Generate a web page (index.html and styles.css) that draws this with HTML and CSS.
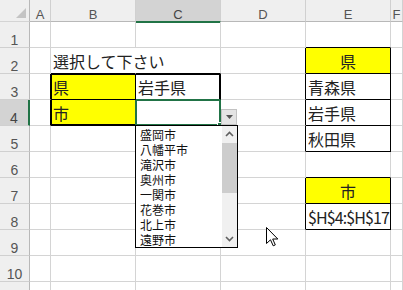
FILE: index.html
```html
<!DOCTYPE html>
<html lang="ja">
<head>
<meta charset="utf-8">
<title>Sheet</title>
<link rel="stylesheet" href="styles.css">
</head>
<body>
<div class="sheet">
  <div class="grid">
    <div class="hd corner"><svg class="tri" width="30" height="22" viewBox="0 0 30 22"><polygon points="16,18 26,18 26,8" fill="#c4c4c4"/></svg></div>
    <div class="hd col">A</div>
    <div class="hd col">B</div>
    <div class="hd col sel">C</div>
    <div class="hd col">D</div>
    <div class="hd col">E</div>
    <div class="hd col">F</div>

    <div class="hd rh">1</div>
    <div></div><div></div><div></div><div></div><div class="bb"></div><div></div>

    <div class="hd rh">2</div>
    <div></div>
    <div class="bb nbr">選択して下さい</div>
    <div class="bb"></div>
    <div class="br"></div>
    <div class="y br bb ctr">県</div>
    <div></div>

    <div class="hd rh">3</div>
    <div class="br"></div>
    <div class="y br bb b3">県</div>
    <div class="br gb c3">岩手県</div>
    <div class="br"></div>
    <div class="br bb">青森県</div>
    <div></div>

    <div class="hd rh sel">4</div>
    <div class="br"></div>
    <div class="y gr bb b4">市</div>
    <div class="gr gb c4"><span class="handle"></span></div>
    <div class="br"></div>
    <div class="br bb">岩手県</div>
    <div></div>

    <div class="hd rh">5</div>
    <div></div><div></div><div></div>
    <div class="br"></div>
    <div class="br bb">秋田県</div>
    <div></div>

    <div class="hd rh">6</div>
    <div></div><div></div><div></div><div></div><div class="bb"></div><div></div>

    <div class="hd rh">7</div>
    <div></div><div></div><div></div>
    <div class="br"></div>
    <div class="y br bb ctr">市</div>
    <div></div>

    <div class="hd rh">8</div>
    <div></div><div></div><div></div>
    <div class="br"></div>
    <div class="br bb ref">$H$4:$H$17</div>
    <div></div>

    <div class="hd rh">9</div>
    <div></div><div></div><div></div><div></div><div></div><div></div>

    <div class="hd rh">10</div>
    <div></div><div></div><div></div><div></div><div></div><div></div>

    <div class="hd rh"></div>
    <div></div><div></div><div></div><div></div><div></div><div></div>
  </div>

  <div class="ddbtn"><svg width="7" height="4" viewBox="0 0 7 4"><polygon points="0,0 7,0 3.5,4" fill="#555"/></svg></div>

  <div class="listbox">
    <ul class="items">
      <li>盛岡市</li>
      <li>八幡平市</li>
      <li>滝沢市</li>
      <li>奥州市</li>
      <li>一関市</li>
      <li>花巻市</li>
      <li>北上市</li>
      <li>遠野市</li>
    </ul>
    <div class="vscroll">
      <div class="sbtn up"><svg width="9" height="6" viewBox="0 0 9 6"><polyline points="1,5 4.5,1.5 8,5" fill="none" stroke="#606060" stroke-width="1.6"/></svg></div>
      <div class="thumb"></div>
      <div class="track"></div>
      <div class="sbtn down"><svg width="9" height="6" viewBox="0 0 9 6"><polyline points="1,1 4.5,4.5 8,1" fill="none" stroke="#606060" stroke-width="1.6"/></svg></div>
    </div>
  </div>

  <svg class="cursor" width="13" height="20" viewBox="0 0 13 20"><polygon points="0.5,0.5 0.5,16.5 4.5,12.8 7.2,18.8 9.3,17.9 6.7,12 11.8,12" fill="#fff" stroke="#000" stroke-width="1" stroke-linejoin="round"/></svg>
</div>
</body>
</html>
```
FILE: styles.css
```css
html, body {
  margin: 0;
  padding: 0;
  background: #fff;
}
body {
  width: 403px;
  height: 290px;
  overflow: hidden;
  font-family: "Noto Sans CJK JP", sans-serif;
}
.sheet {
  position: relative;
  width: 403px;
  height: 290px;
  overflow: hidden;
}
.grid {
  display: grid;
  grid-template-columns: 30px 21px 85px 85px 85px 85px 1fr;
  grid-template-rows: 22px repeat(11, 26px);
}
.grid > div {
  box-sizing: border-box;
  border-right: 1px solid #d4d4d4;
  border-bottom: 1px solid #d4d4d4;
  font-size: 16px;
  line-height: 26px;
  padding-left: 2px;
  white-space: nowrap;
  color: #222;
  min-width: 0;
}
.grid > .hd {
  background: #efefef;
  font-family: "Liberation Sans", sans-serif;
  color: #555;
  text-align: center;
  padding-left: 0;
}
.grid > .col {
  font-size: 13px;
  line-height: 14px;
  padding-top: 8px;
  border-bottom-color: #b8b8b8;
  border-right-color: #d0d0d0;
}
.grid > .corner {
  padding: 0;
  border-right-color: #b8b8b8;
}
.tri {
  display: block;
}
.grid > .rh {
  font-size: 14px;
  line-height: 16px;
  padding-top: 10px;
  border-right-color: #b8b8b8;
  border-bottom-color: #d0d0d0;
}
.grid > .col.sel {
  background: #d3d3d3;
  border-bottom-color: #217346;
  box-shadow: 0 1px 0 #217346;
  color: #444;
}
.grid > .rh.sel {
  background: #d3d3d3;
  border-right: 2px solid #217346;
  color: #444;
}

.grid > .bb { border-bottom-color: #000; }
.grid > .br { border-right-color: #000; }
.grid > .gb { border-bottom-color: #217346; }
.grid > .gr { border-right-color: #217346; }
.grid > .nbr { border-right-color: transparent; overflow: visible; }
.grid > .y { background: #ffff00; }
.grid > .ctr { text-align: center; padding-left: 0; }
.grid > .ref {
  padding-left: 2px;
  letter-spacing: -0.9px;
  overflow: hidden;
}

.grid > .b3 { box-shadow: inset 1px 1px 0 #000; }
.grid > .c3 { box-shadow: inset -1px 1px 0 #000; }
.grid > .b4 { box-shadow: inset 1px -1px 0 #000; }
.grid > .c4 {
  position: relative;
  box-shadow: inset 1px 1px 0 #217346, inset -1px -1px 0 #217346;
}
.handle {
  position: absolute;
  right: -4px;
  bottom: -4px;
  width: 5px;
  height: 5px;
  background: #217346;
  border: 1px solid #fff;
}

.ddbtn {
  position: absolute;
  left: 221px;
  top: 109px;
  width: 16px;
  height: 16px;
  box-sizing: border-box;
  background: #e4e4e4;
  border: 1px solid #c2c2c2;
  display: flex;
  align-items: center;
  justify-content: center;
}
.ddbtn svg { display: block; }

.listbox {
  position: absolute;
  left: 135px;
  top: 125px;
  width: 103px;
  height: 123px;
  box-sizing: border-box;
  border: 1px solid #000;
  background: #fff;
  display: flex;
}
.items {
  list-style: none;
  margin: 0;
  padding: 1px 0 0 4px;
  flex: 1;
  font-size: 12px;
  line-height: 15px;
  color: #111;
  overflow: hidden;
}
.items li {
  height: 15px;
}
.vscroll {
  width: 15px;
  background: #f0f0f0;
  display: flex;
  flex-direction: column;
}
.sbtn {
  height: 16px;
  display: flex;
  align-items: center;
  justify-content: center;
}
.sbtn svg { display: block; }
.thumb {
  height: 50px;
  margin-top: 1px;
  background: #cdcdcd;
}
.track { flex: 1; }
.down { height: 17px; }

.cursor {
  position: absolute;
  left: 266px;
  top: 227px;
}
```
